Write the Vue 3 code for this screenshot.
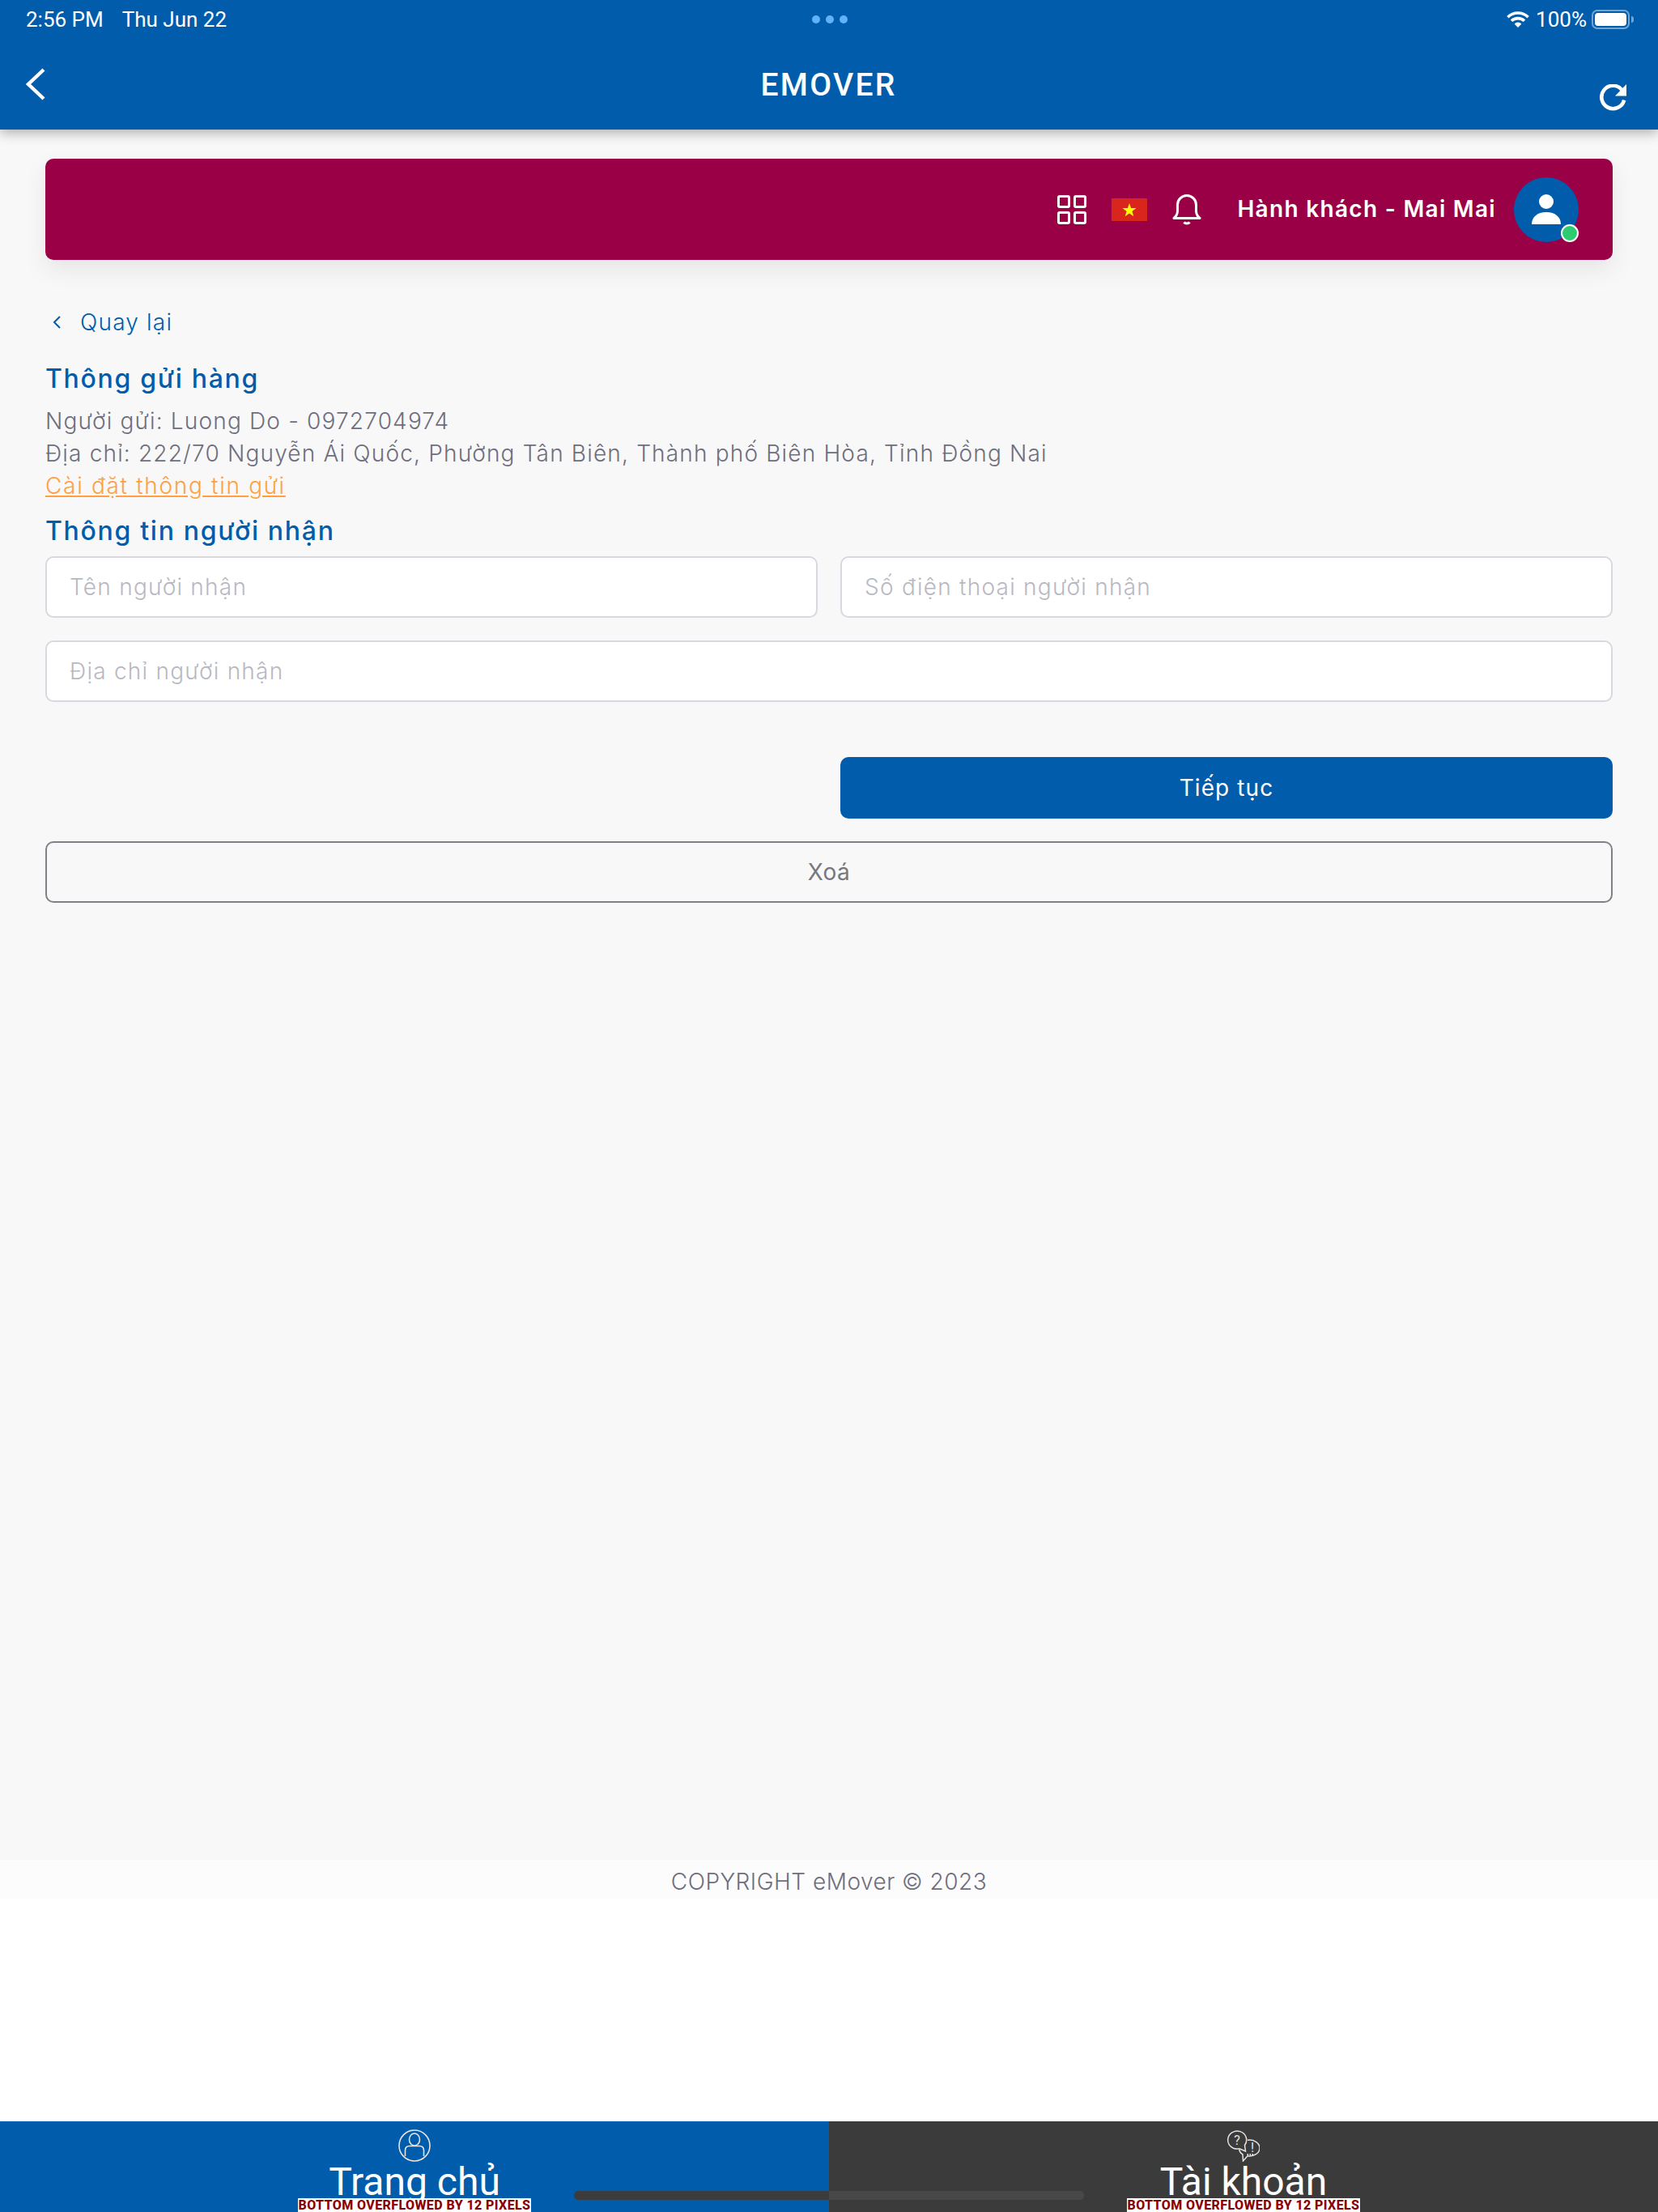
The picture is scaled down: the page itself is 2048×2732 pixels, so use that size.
<script setup>
const overflowLabel = "BOTTOM OVERFLOWED BY 12 PIXELS"
</script>

<template>
  <div class="page">
    <header class="app-header">
      <div class="status-bar">
        <div class="status-left">
          <span>2:56 PM</span>
          <span>Thu Jun 22</span>
        </div>
        <div class="status-dots"><i></i><i></i><i></i></div>
        <div class="status-right">
          <svg class="wifi" width="28" height="20" viewBox="0 0 28 20" fill="none" stroke="#fff" stroke-width="3.6">
            <path d="M1.4 7.2a18 18 0 0 1 25.2 0" />
            <path d="M6 11.8a11.6 11.6 0 0 1 16 0" />
            <path d="M14 20l-4.4-4.6a6.2 6.2 0 0 1 8.8 0z" fill="#fff" stroke="none" />
          </svg>
          <span class="battery-text">100%</span>
          <div class="battery"><div class="battery-fill"></div></div>
          <div class="battery-nub"></div>
        </div>
      </div>
      <div class="nav-bar">
        <svg class="nav-back" width="24" height="40" viewBox="0 0 24 40" fill="none" stroke="#fff" stroke-width="4.4">
          <path d="M22 2L3 20l19 18" />
        </svg>
        <div class="nav-title">EMOVER</div>
        <svg class="nav-refresh" width="33" height="33" viewBox="0 0 33 33" fill="none">
          <path d="M27.4 6.900A14.200 14.200 0 1 0 30.200 19.700" stroke="#fff" stroke-width="4.600" />
          <path d="M33 0v14.500H19z" fill="#fff" />
        </svg>
      </div>
    </header>

    <main class="content">
      <div class="user-banner">
        <svg class="grid-icon" width="36" height="36" viewBox="0 0 36 36" fill="none" stroke="#fff" stroke-width="3">
          <rect x="1.500" y="1.500" width="13" height="13" rx="1.500" />
          <rect x="21.500" y="1.500" width="13" height="13" rx="1.500" />
          <rect x="1.500" y="21.500" width="13" height="13" rx="1.500" />
          <rect x="21.500" y="21.500" width="13" height="13" rx="1.500" />
        </svg>
        <svg class="flag-icon" width="44" height="28" viewBox="0 0 44 28">
          <rect width="44" height="28" fill="#da251d" />
          <path d="M22 6l2.100 6.100h6.500l-5.200 3.900 1.900 6.200-5.300-3.700-5.300 3.700 1.900-6.200-5.200-3.900h6.500z" fill="#ff0" />
        </svg>
        <svg class="bell-icon" width="36" height="38" viewBox="0 0 36 38" fill="none" stroke="#fff" stroke-width="3">
          <path d="M2 29.500c3-2.500 4.500-5 4.500-9V13a11.500 11.500 0 0 1 23 0v7.500c0 4 1.500 6.500 4.500 9z" stroke-linejoin="round" />
          <path d="M14.500 34.500c1.500 2 5.500 2 7 0" />
        </svg>
        <div class="user-name">Hành khách - Mai Mai</div>
        <div class="avatar">
          <svg width="36" height="38" viewBox="0 0 36 38" fill="#fff">
            <circle cx="18" cy="9" r="9" />
            <path d="M0 37c0-9 7-15 18-15s18 6 18 15z" />
          </svg>
          <span class="online-dot"></span>
        </div>
      </div>

      <div class="form-area">
        <div class="back-link">
          <svg width="10" height="16" viewBox="0 0 10 16" fill="none" stroke="#015cab" stroke-width="2">
            <path d="M9 1L2 8l7 7" />
          </svg>
          <span>Quay lại</span>
        </div>

        <h2 class="section-title first">Thông gửi hàng</h2>
        <div class="sender-info">
          <p>Người gửi: Luong Do - 0972704974</p>
          <p>Địa chỉ: 222/70 Nguyễn Ái Quốc, Phường Tân Biên, Thành phố Biên Hòa, Tỉnh Đồng Nai</p>
          <a class="settings-link">Cài đặt thông tin gửi</a>
        </div>

        <h2 class="section-title second">Thông tin người nhận</h2>
        <div class="form-grid">
          <input class="field" placeholder="Tên người nhận" />
          <input class="field" placeholder="Số điện thoại người nhận" />
          <input class="field wide" placeholder="Địa chỉ người nhận" />
          <button class="btn-primary">Tiếp tục</button>
          <button class="btn-outline">Xoá</button>
        </div>
      </div>
    </main>

    <div class="copyright">COPYRIGHT eMover © 2023</div>
    <div class="blank"></div>

    <nav class="tab-bar">
      <div class="tab tab-active">
        <svg width="40" height="40" viewBox="0 0 40 40" fill="none" stroke="#e4e4e4" stroke-width="1.600">
          <circle cx="20" cy="20" r="19" />
          <ellipse cx="20" cy="12.500" rx="6.500" ry="7.500" />
          <path d="M8.500 33v-7c0-3.500 2-5.500 5.500-5.500h12c3.500 0 5.500 2 5.500 5.500v7" />
        </svg>
        <span class="tab-label">Trang chủ</span>
        <span class="overflow-flag">{{ overflowLabel }}</span>
      </div>
      <div class="tab tab-dark">
        <svg width="40" height="40" viewBox="0 0 40 40" fill="none" stroke="#e4e4e4" stroke-width="1.500">
          <path d="M15 23.700A11.500 11 0 1 1 21.500 19.500L22.500 27Z" />
          <path d="M25 13.200A12.500 10 0 1 1 25 32.800L19.500 39 19 31A12.500 10 0 0 1 14.600 25" />
          <text x="12" y="19" class="tab-glyph">?</text>
          <text x="31" y="28" class="tab-glyph">!</text>
          <path d="M24.500 31h1.500M27.500 31h1.500M30.500 31h1.500" stroke-width="1.800" />
        </svg>
        <span class="tab-label">Tài khoản</span>
        <span class="overflow-flag">{{ overflowLabel }}</span>
      </div>
      <div class="home-indicator"></div>
    </nav>
  </div>
</template>

<style scoped>
.page {
  width: 2048px;
  height: 2732px;
  display: flex;
  flex-direction: column;
  background: #fff;
  font-family: Inter, "Noto Sans", sans-serif;
  overflow: hidden;
}

.app-header {
  height: 160px;
  flex-shrink: 0;
  background: #015cab;
  color: #fff;
  box-shadow: 0 4px 14px rgba(0, 0, 0, 0.3);
  position: relative;
  z-index: 2;
}

.status-bar {
  height: 48px;
  display: grid;
  grid-template-columns: 1fr auto 1fr;
  align-items: center;
  padding: 0 30px 0 32px;
  font-family: Roboto, sans-serif;
  font-size: 26px;
}

.status-left {
  display: flex;
  gap: 23px;
}

.status-dots {
  display: flex;
  gap: 7px;
}

.status-dots i {
  width: 10px;
  height: 10px;
  border-radius: 50%;
  background: #5eb3fb;
}

.status-right {
  display: flex;
  align-items: center;
  justify-content: flex-end;
}

.battery-text {
  margin-left: 8px;
}

.battery {
  width: 47px;
  height: 24px;
  margin-left: 6px;
  border: 2px solid rgba(255, 255, 255, 0.45);
  border-radius: 7px;
  padding: 2px;
  box-sizing: border-box;
}

.battery-fill {
  width: 100%;
  height: 100%;
  background: #fff;
  border-radius: 4px;
}

.battery-nub {
  width: 3px;
  height: 8px;
  margin-left: 2px;
  background: rgba(255, 255, 255, 0.45);
  border-radius: 0 3px 3px 0;
}

.nav-bar {
  height: 112px;
  display: grid;
  grid-template-columns: 1fr auto 1fr;
  align-items: start;
  padding: 36px 39px 0 32px;
  box-sizing: border-box;
}

.nav-title {
  font-family: Roboto, sans-serif;
  font-size: 39px;
  font-weight: 500;
  line-height: 46px;
  letter-spacing: 2.3px;
  margin: -2px 0 0 6px;
}

.nav-refresh {
  justify-self: end;
  margin-top: 20px;
}

.content {
  flex: 1;
  background: #f8f8f8;
  padding: 36px 56px 0;
}

.user-banner {
  height: 125px;
  display: flex;
  align-items: center;
  justify-content: flex-end;
  padding-right: 42px;
  background: #9a0046;
  border-radius: 10px;
  box-shadow: 0 12px 30px rgba(0, 0, 0, 0.08);
  color: #fff;
}

.grid-icon {
  margin-right: 31px;
}

.flag-icon {
  margin-right: 31px;
}

.bell-icon {
  margin-right: 44px;
}

.user-name {
  font-size: 28px;
  font-weight: 600;
  letter-spacing: 1.3px;
  margin: -1px 22px 0 0;
}

.avatar {
  width: 80px;
  height: 80px;
  border-radius: 50%;
  background: #015cab;
  display: flex;
  align-items: center;
  justify-content: center;
  position: relative;
}

.online-dot {
  position: absolute;
  right: 0;
  bottom: 0;
  width: 22px;
  height: 22px;
  box-sizing: border-box;
  border-radius: 50%;
  background: #2ecc71;
  border: 2px solid #fff;
}

.form-area {
  margin-top: 57px;
}

.back-link {
  height: 40px;
  display: flex;
  align-items: center;
  font-size: 28px;
  font-weight: 300;
  line-height: 40px;
  letter-spacing: 1.2px;
  color: #015cab;
  padding-left: 9px;
  gap: 24px;
}

.section-title {
  margin: 0;
  font-size: 32px;
  font-weight: 500;
  line-height: 40px;
  letter-spacing: 1.7px;
  color: #015cab;
}

.section-title.first {
  margin-top: 30px;
}

.section-title.second {
  margin-top: 16px;
}

.sender-info {
  margin-top: 12px;
  font-size: 28px;
  font-weight: 300;
  line-height: 40px;
  letter-spacing: 1.18px;
  color: #6e6e7e;
}

.sender-info p {
  margin: 0;
}

.settings-link {
  display: block;
  color: #ffa040;
  text-decoration: underline;
  letter-spacing: 1.7px;
}

.form-grid {
  margin-top: 11px;
  display: grid;
  grid-template-columns: 1fr 1fr;
  gap: 28px;
}

.field {
  height: 76px;
  box-sizing: border-box;
  border: 2px solid #d8d8e0;
  border-radius: 10px;
  background: #fff;
  padding: 0 28px;
  font: inherit;
  font-size: 28px;
  font-weight: 300;
  letter-spacing: 1.25px;
  outline: none;
  min-width: 0;
}

.field::placeholder {
  color: #b8b8c2;
  opacity: 1;
}

.field.wide {
  grid-column: 1 / 3;
}

.btn-primary {
  grid-column: 2;
  height: 76px;
  margin-top: 40px;
  border: none;
  border-radius: 10px;
  background: #015cab;
  color: #fff;
  font: inherit;
  font-size: 28px;
  letter-spacing: 1.1px;
}

.btn-outline {
  grid-column: 1 / 3;
  height: 76px;
  border: 2px solid #808088;
  border-radius: 10px;
  background: transparent;
  color: #77777f;
  font: inherit;
  font-size: 28px;
  letter-spacing: 0.5px;
}

.copyright {
  height: 48px;
  box-sizing: border-box;
  padding-top: 3px;
  flex-shrink: 0;
  background: #fcfcfc;
  color: #6e6e7e;
  font-size: 28px;
  font-weight: 300;
  line-height: 48px;
  letter-spacing: 0.5px;
  text-align: center;
}

.blank {
  height: 275px;
  flex-shrink: 0;
}

.tab-bar {
  height: 112px;
  flex-shrink: 0;
  display: flex;
  position: relative;
}

.tab {
  flex: 1;
  display: flex;
  flex-direction: column;
  align-items: center;
  padding-top: 10px;
  position: relative;
  overflow: hidden;
}

.tab-active {
  background: #015cab;
}

.tab-dark {
  background: #3b3b3b;
}

.tab-label {
  font-family: Roboto, sans-serif;
  font-size: 48px;
  line-height: 56px;
  color: #fff;
  margin-top: -3px;
}

.tab-glyph {
  font-family: Roboto, sans-serif;
  font-size: 16px;
  fill: #e4e4e4;
  stroke: none;
  text-anchor: middle;
}

.overflow-flag {
  position: absolute;
  bottom: 0;
  left: 50%;
  transform: translateX(-50%);
  width: 288px;
  height: 17px;
  background: #fff;
  color: #8b0000;
  font-family: Roboto, sans-serif;
  font-size: 16px;
  font-weight: 800;
  line-height: 17px;
  letter-spacing: 0.4px;
  text-align: center;
  white-space: nowrap;
}

.home-indicator {
  position: absolute;
  left: 709px;
  top: 86px;
  width: 630px;
  height: 11px;
  border-radius: 6px;
  background: linear-gradient(to right, #3c3c3c 50%, #484848 50%);
}
</style>

<style>
html,
body {
  margin: 0;
}
</style>
